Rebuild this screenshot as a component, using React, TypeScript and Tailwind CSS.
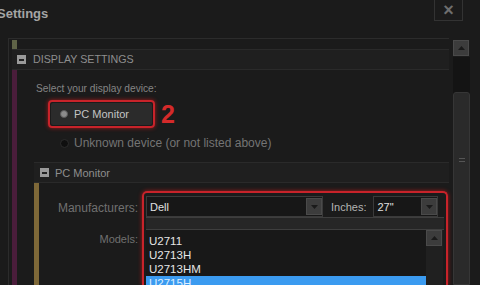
import React from "react";

const models = ["U2711", "U2713H", "U2713HM", "U2715H"];

function MinusBox() {
  return (
    <span className="flex h-[9px] w-[9px] items-center justify-center bg-[#9a9a9a]">
      <span className="h-[2px] w-[5px] bg-[#222]" />
    </span>
  );
}

function ArrowButton({ up }: { up?: boolean }) {
  return (
    <span className="flex h-full w-[16px] items-center justify-center border border-[#4a4a4a] bg-[#3c3c3c]">
      <svg width="7" height="4" viewBox="0 0 7 4">
        <path d={up ? "M0 4 L3.5 0 L7 4 Z" : "M0 0 L3.5 4 L7 0 Z"} fill="#1a1a1a" />
      </svg>
    </span>
  );
}

export default function App() {
  return (
    <div className="flex h-[285px] w-[480px] flex-col overflow-hidden bg-[#1b1b1b] font-['Liberation_Sans',Arial,sans-serif] text-[11px]">
      <div className="flex h-[38px] shrink-0 items-start justify-between">
        <div className="-ml-[3px] mt-[4px] text-[13px] font-bold text-[#a4a4a4]">Settings</div>
        <div className="mr-[17px] flex h-[21px] w-[29px] items-center justify-center border border-t-0 border-[#333] text-[18px] font-bold leading-none text-[#6e6e6e]">
          ×
        </div>
      </div>

      <div className="flex min-h-0 flex-1">
        <div className="ml-[8px] flex min-w-0 flex-1 flex-col border-l border-t border-[#2c2c2c] pl-[3px] pt-[1px]">
          <div className="h-[9px] w-[5px] bg-[#5f6347]" />
          <div className="flex h-[21px] shrink-0 items-center gap-[7px] border-y border-[#2a2a2a] bg-[#1f1f1f] pl-[5px] text-[#8e8e8e]">
            <MinusBox />
            <span className="text-[10.7px]">DISPLAY SETTINGS</span>
          </div>

          <div className="flex min-h-0 flex-1">
            <div className="w-[5px] shrink-0 bg-[#4a1d3b]" />
            <div className="flex min-w-0 flex-1 flex-col">
              <div className="mt-[11px] pl-[19px] text-[10.2px] text-[#858585]">Select your display device:</div>

              <div className="mt-[4px] flex items-center pl-[31px]">
                <div className="rounded-[4px] border-2 border-[#c8232a] p-[1px] shadow-[0_0_4px_#ff1a1a99]">
                  <div className="flex h-[22px] w-[101px] items-center gap-[6px] rounded-[2px] bg-[#2b2b2b] pl-[9px] text-[#c4c4c4]">
                    <span className="h-[8px] w-[8px] rounded-full border border-[#5a5a5a] bg-[#8c8c8c]" />
                    <span>PC Monitor</span>
                  </div>
                </div>
                <span className="ml-[6px] text-[25px] font-bold leading-none text-[#d42a2a]">2</span>
              </div>

              <div className="mt-[6px] flex items-center gap-[5px] pl-[43px] text-[12px] text-[#747474]">
                <span className="h-[9px] w-[9px] rounded-full border border-[#2c2c2c] bg-[#0f0f0f]" />
                <span>Unknown device (or not listed above)</span>
              </div>

              <div className="mt-[10px] flex min-h-0 flex-1 flex-col pl-[17px]">
                <div className="flex h-[21px] shrink-0 items-center gap-[6px] border-y border-[#2a2a2a] bg-[#1f1f1f] pl-[6px] text-[#8e8e8e]">
                  <MinusBox />
                  <span className="text-[11px]">PC Monitor</span>
                </div>
                <div className="flex min-h-0 flex-1">
                  <div className="w-[5px] shrink-0 bg-[#7e6838]" />
                  <div className="flex min-w-0 flex-1 pt-[8px]">
                    <div className="flex w-[103px] shrink-0 flex-col items-end pr-[4px] pt-[8px] text-[#707070]">
                      <span className="h-[15px] text-[12px]">Manufacturers:</span>
                      <span className="mt-[17px]">Models:</span>
                    </div>
                    <div className="-mr-[2px] flex-1 rounded-t-[5px] border-2 border-b-0 border-[#c8232a] px-[2px] pt-[3px] shadow-[0_0_4px_#ff1a1a99]">
                      <div className="flex h-[21px] items-center">
                        <div className="flex h-full w-[177px] items-center border border-[#3a3a3a] bg-[#171717] pl-[3px] text-[#e0e0e0]">
                          <span className="flex-1">Dell</span>
                          <span className="h-[17px] py-0">
                            <ArrowButton />
                          </span>
                        </div>
                        <span className="ml-[8px] text-[#b4b4b4]">Inches:</span>
                        <div className="ml-[7px] flex h-full w-[65px] items-center border border-[#3a3a3a] bg-[#171717] pl-[3px] text-[#e0e0e0]">
                          <span className="flex-1">27"</span>
                          <span className="h-[17px]">
                            <ArrowButton />
                          </span>
                        </div>
                      </div>
                      <div className="h-[13px] border-b border-t border-[#3e3e3e] bg-[#262626]" />
                      <div className="flex w-[297px] bg-[#181818]">
                        <div className="flex-1 pt-[4px]">
                          {models.map((m, i) => (
                            <div
                              key={m}
                              className={`h-[14px] pl-[3px] text-[11.5px] leading-[14px] ${
                                i === 3 ? "bg-[#3b9bf0] text-[#dfefff]" : "text-[#e6e6e6]"
                              }`}
                            >
                              {m}
                            </div>
                          ))}
                        </div>
                        <div className="flex w-[17px] flex-col bg-[#202020]">
                          <span className="h-[16px]">
                            <ArrowButton up />
                          </span>
                        </div>
                      </div>
                    </div>
                    <div className="w-[3px]" />
                  </div>
                </div>
              </div>
            </div>
          </div>
        </div>

        <div className="ml-[4px] mr-[10px] flex w-[17px] flex-col pt-[2px]">
          <span className="h-[16px]">
            <ArrowButton up />
          </span>
          <div className="mt-[1px] flex flex-1 flex-col bg-[#141414]">
            <div className="h-[35px]" />
            <div className="flex flex-1 flex-col items-center rounded-t-[3px] border border-[#363636] bg-[#2a2a2a] pt-[65px]">
              <span className="h-[1px] w-[6px] bg-[#555]" />
              <span className="mt-[2px] h-[1px] w-[6px] bg-[#555]" />
            </div>
          </div>
        </div>
      </div>
    </div>
  );
}
